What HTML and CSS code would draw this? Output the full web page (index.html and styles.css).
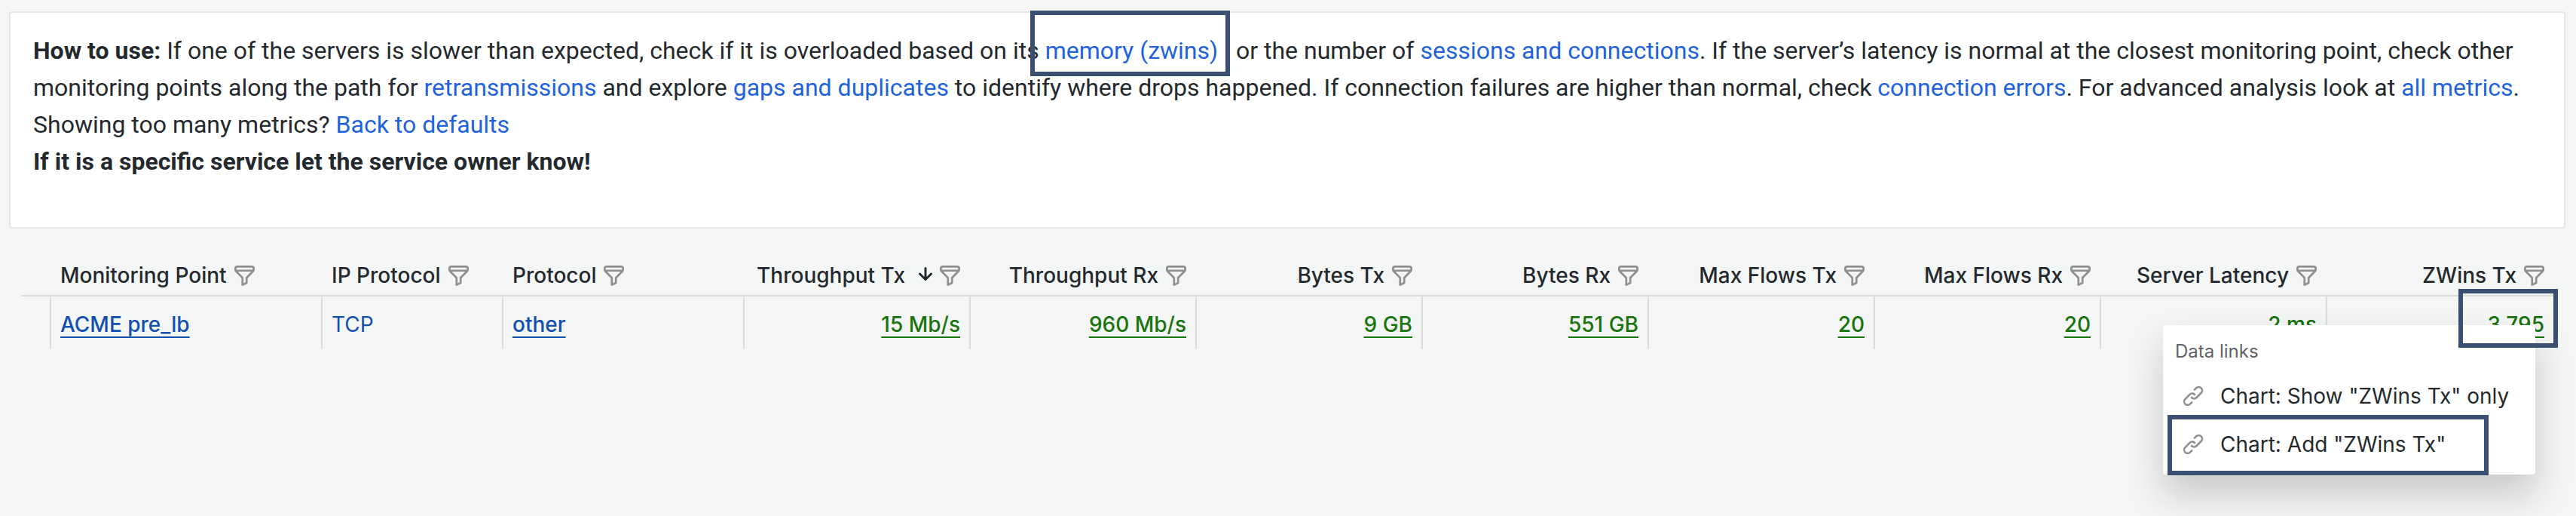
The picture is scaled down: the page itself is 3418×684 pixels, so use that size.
FILE: index.html
```html
<!DOCTYPE html>
<html lang="en">
<head>
    <meta charset="UTF-8">
    <meta name="viewport" content="width=device-width, initial-scale=1.0">
    <title>Server Metrics</title>
    <link rel="stylesheet" href="styles.css">
</head>
<body>
    <!-- Shared icons -->
    <svg class="icon-defs" aria-hidden="true">
        <symbol id="icon-filter" viewBox="2 2 20 20">
            <path d="M19,2H5A3,3,0,0,0,2,5V6.17a3,3,0,0,0,.25,1.2l0,.06a2.81,2.81,0,0,0,.59.86L9,14.41V21a1,1,0,0,0,.47.85A1,1,0,0,0,10,22a1,1,0,0,0,.45-.11l4-2A1,1,0,0,0,15,19V14.41l6.12-6.12a2.81,2.81,0,0,0,.59-.86l0-.06A3,3,0,0,0,22,6.17V5A3,3,0,0,0,19,2ZM13.29,13.29A1,1,0,0,0,13,14v4.38l-2,1V14a1,1,0,0,0-.29-.71L5.41,8H18.59ZM20,6H4V5A1,1,0,0,1,5,4H19a1,1,0,0,1,1,1Z"/>
        </symbol>
        <symbol id="icon-arrow" viewBox="6 6 12 12">
            <path d="M17.71,11.29a1,1,0,0,0-1.42,0L13,14.59V7a1,1,0,0,0-2,0v7.59l-3.29-3.3a1,1,0,0,0-1.42,1.42l5,5a1,1,0,0,0,.33.21.94.94,0,0,0,.76,0,1,1,0,0,0,.33-.21l5-5A1,1,0,0,0,17.71,11.29Z"/>
        </symbol>
        <symbol id="icon-link" viewBox="0 0 24 24">
            <path d="M10,17.55,8.23,19.27a2.47,2.47,0,0,1-3.5-3.5l4.54-4.55a2.46,2.46,0,0,1,3.39-.09l.12.1a1,1,0,0,0,1.4-1.43A2.75,2.75,0,0,0,14,9.59a4.46,4.46,0,0,0-6.09.22L3.31,14.36a4.48,4.48,0,0,0,6.33,6.33L11.37,19A1,1,0,0,0,10,17.55ZM20.69,3.31a4.49,4.49,0,0,0-6.33,0L12.63,5A1,1,0,0,0,14,6.45l1.73-1.72a2.47,2.47,0,0,1,3.5,3.5l-4.54,4.55a2.46,2.46,0,0,1-3.39.09l-.12-.1a1,1,0,0,0-1.4,1.43,2.75,2.75,0,0,0,.23.21,4.47,4.47,0,0,0,6.09-.22l4.55-4.55A4.49,4.49,0,0,0,20.69,3.31Z"/>
        </symbol>
    </svg>

    <div class="help-panel">
        <p>
            <strong>How to use:</strong> If one of the servers is slower than expected, check if it is overloaded based on its
            <a class="marked mark-memory" href="#">memory (zwins)</a>&nbsp;&nbsp; or the number of <a href="#">sessions and connections</a>.
            If the server’s latency is normal at the closest monitoring point, check other<br>
            monitoring points along the path for
            <a href="#">retransmissions</a> and explore <a href="#">gaps and duplicates</a> to identify where drops happened.
            If connection failures are higher than normal, check <a href="#">connection errors</a>.
            For advanced analysis look at <a href="#">all metrics</a>.<br>
            Showing too many metrics? <a href="#">Back to defaults</a><br>
            <strong>If it is a specific service let the service owner know!</strong>
        </p>
    </div>

    <div class="table-panel">
        <table class="metrics">
            <colgroup>
                <col class="col-expand">
                <col class="col-point">
                <col class="col-ip">
                <col class="col-protocol">
                <col span="8">
            </colgroup>
            <thead>
                <tr>
                    <td></td>
                    <th><div class="head">Monitoring Point <button class="filter" aria-label="Filter"><svg><use href="#icon-filter"/></svg></button></div></th>
                    <th><div class="head">IP Protocol <button class="filter" aria-label="Filter"><svg><use href="#icon-filter"/></svg></button></div></th>
                    <th><div class="head">Protocol <button class="filter" aria-label="Filter"><svg><use href="#icon-filter"/></svg></button></div></th>
                    <th class="num"><div class="head">Throughput Tx <svg class="arrow"><use href="#icon-arrow"/></svg><button class="filter" aria-label="Filter"><svg><use href="#icon-filter"/></svg></button></div></th>
                    <th class="num"><div class="head">Throughput Rx <button class="filter" aria-label="Filter"><svg><use href="#icon-filter"/></svg></button></div></th>
                    <th class="num"><div class="head">Bytes Tx <button class="filter" aria-label="Filter"><svg><use href="#icon-filter"/></svg></button></div></th>
                    <th class="num"><div class="head">Bytes Rx <button class="filter" aria-label="Filter"><svg><use href="#icon-filter"/></svg></button></div></th>
                    <th class="num"><div class="head">Max Flows Tx <button class="filter" aria-label="Filter"><svg><use href="#icon-filter"/></svg></button></div></th>
                    <th class="num"><div class="head">Max Flows Rx <button class="filter" aria-label="Filter"><svg><use href="#icon-filter"/></svg></button></div></th>
                    <th class="num"><div class="head">Server Latency <button class="filter" aria-label="Filter"><svg><use href="#icon-filter"/></svg></button></div></th>
                    <th class="num"><div class="head">ZWins Tx <button class="filter" aria-label="Filter"><svg><use href="#icon-filter"/></svg></button></div></th>
                </tr>
            </thead>
            <tbody>
                <tr>
                    <td></td>
                    <td><a href="#">ACME pre_lb</a></td>
                    <td class="plain">TCP</td>
                    <td><a href="#">other</a></td>
                    <td class="num"><a href="#">15 Mb/s</a></td>
                    <td class="num"><a href="#">960 Mb/s</a></td>
                    <td class="num"><a href="#">9 GB</a></td>
                    <td class="num"><a href="#">551 GB</a></td>
                    <td class="num"><a href="#">20</a></td>
                    <td class="num"><a href="#">20</a></td>
                    <td class="num"><a href="#">2 ms</a></td>
                    <td class="num"><a class="marked mark-zwins" href="#">3,795</a></td>
                </tr>
            </tbody>
        </table>

        <!-- Context menu opened from the ZWins Tx cell -->
        <div class="menu">
            <div class="menu-title">Data links</div>
            <a class="menu-item" href="#"><svg><use href="#icon-link"/></svg>Chart: Show "ZWins Tx" only</a>
            <a class="menu-item marked mark-add" href="#"><svg><use href="#icon-link"/></svg>Chart: Add "ZWins Tx"</a>
        </div>
    </div>
</body>
</html>
```
FILE: styles.css
```css
body {
    box-sizing: border-box;
    min-height: 100vh;
    margin: 0;
    padding: 15px 14px 0 12px;
    background-color: #f4f5f5;
    color: #24292e;
    font-family: Inter, sans-serif;
    font-size: 28px;
    line-height: 44px;
}

.icon-defs {
    display: none;
}

svg {
    display: block;
    fill: #8e8f91;
    flex: none;
}

/* Help text */
.help-panel {
    border: 2px solid #e4e6e6;
    border-radius: 4px;
    background-color: #fff;
    padding: 26px 30px 62px;
    font-family: Roboto, sans-serif;
    font-size: 32px;
    line-height: 49px;
}

.help-panel p {
    margin: 0;
}

.help-panel a {
    color: #1f62e0;
    text-decoration: none;
}

/* Annotation frames */
.marked {
    position: relative;
}

.marked::after {
    content: "";
    position: absolute;
    border: 6px solid #3b4f72;
    z-index: 5;
    pointer-events: none;
}

.mark-memory::after {
    inset: -34px -16px -15px -20px;
}

.mark-zwins::after {
    inset: -30px -18px -14px -38px;
}

.mark-add::after {
    inset: -7px 62px -9px 6px;
}

/* Metrics table */
.table-panel {
    position: relative;
    padding: 32px 16px 0 16px;
}

.metrics {
    width: 100%;
    table-layout: fixed;
    border-collapse: separate;
    border-spacing: 0;
}

.col-expand {
    width: 40px;
}

.col-point {
    width: 360px;
}

.col-ip {
    width: 240px;
}

.col-protocol {
    width: 320px;
}

.metrics th,
.metrics thead td {
    padding: 8px 12px 4px;
    border-bottom: 2px solid #dadcdc;
    font-weight: 500;
    text-align: left;
}

.head {
    display: flex;
    align-items: center;
    gap: 10px;
    white-space: nowrap;
}

.metrics .num {
    text-align: right;
}

.num .head {
    justify-content: flex-end;
}

.metrics tbody td {
    height: 70px;
    padding: 3px 12px 0;
    border-right: 2px solid #dadcdc;
    box-sizing: border-box;
    font-weight: 500;
    color: #1250b0;
}

.metrics tbody td:last-child {
    border-right: 0;
}

.metrics tbody .plain {
    font-weight: 400;
}

.metrics tbody a {
    color: #1250b0;
    text-decoration: underline;
    text-decoration-thickness: 2px;
    text-underline-offset: 6px;
}

.metrics tbody .num a {
    color: #19730e;
}

.filter {
    padding: 0;
    border: 0;
    background: none;
    cursor: pointer;
}

.filter svg {
    width: 27px;
    height: 27px;
}

.num .filter {
    margin-right: 2px;
}

.metrics .num:last-child .filter {
    margin-right: 0;
}

.arrow {
    width: 18px;
    height: 18px;
    margin: 0 0 4px 8px;
    fill: #24292e;
}

/* Context menu */
.menu {
    position: absolute;
    top: 128px;
    right: 40px;
    padding-bottom: 8px;
    width: 494px;
    border-radius: 4px;
    background-color: #fff;
    box-shadow: 0 26px 48px rgba(24, 26, 27, 0.2);
}

.menu-title {
    padding: 16px 16px 8px;
    color: #5f6368;
    font-size: 24px;
    line-height: 38px;
}

.menu-item {
    display: flex;
    align-items: center;
    gap: 20px;
    padding: 0 24px;
    height: 64px;
    color: #24292e;
    text-decoration: none;
    white-space: nowrap;
}

.menu-item svg {
    width: 32px;
    height: 32px;
}
```
